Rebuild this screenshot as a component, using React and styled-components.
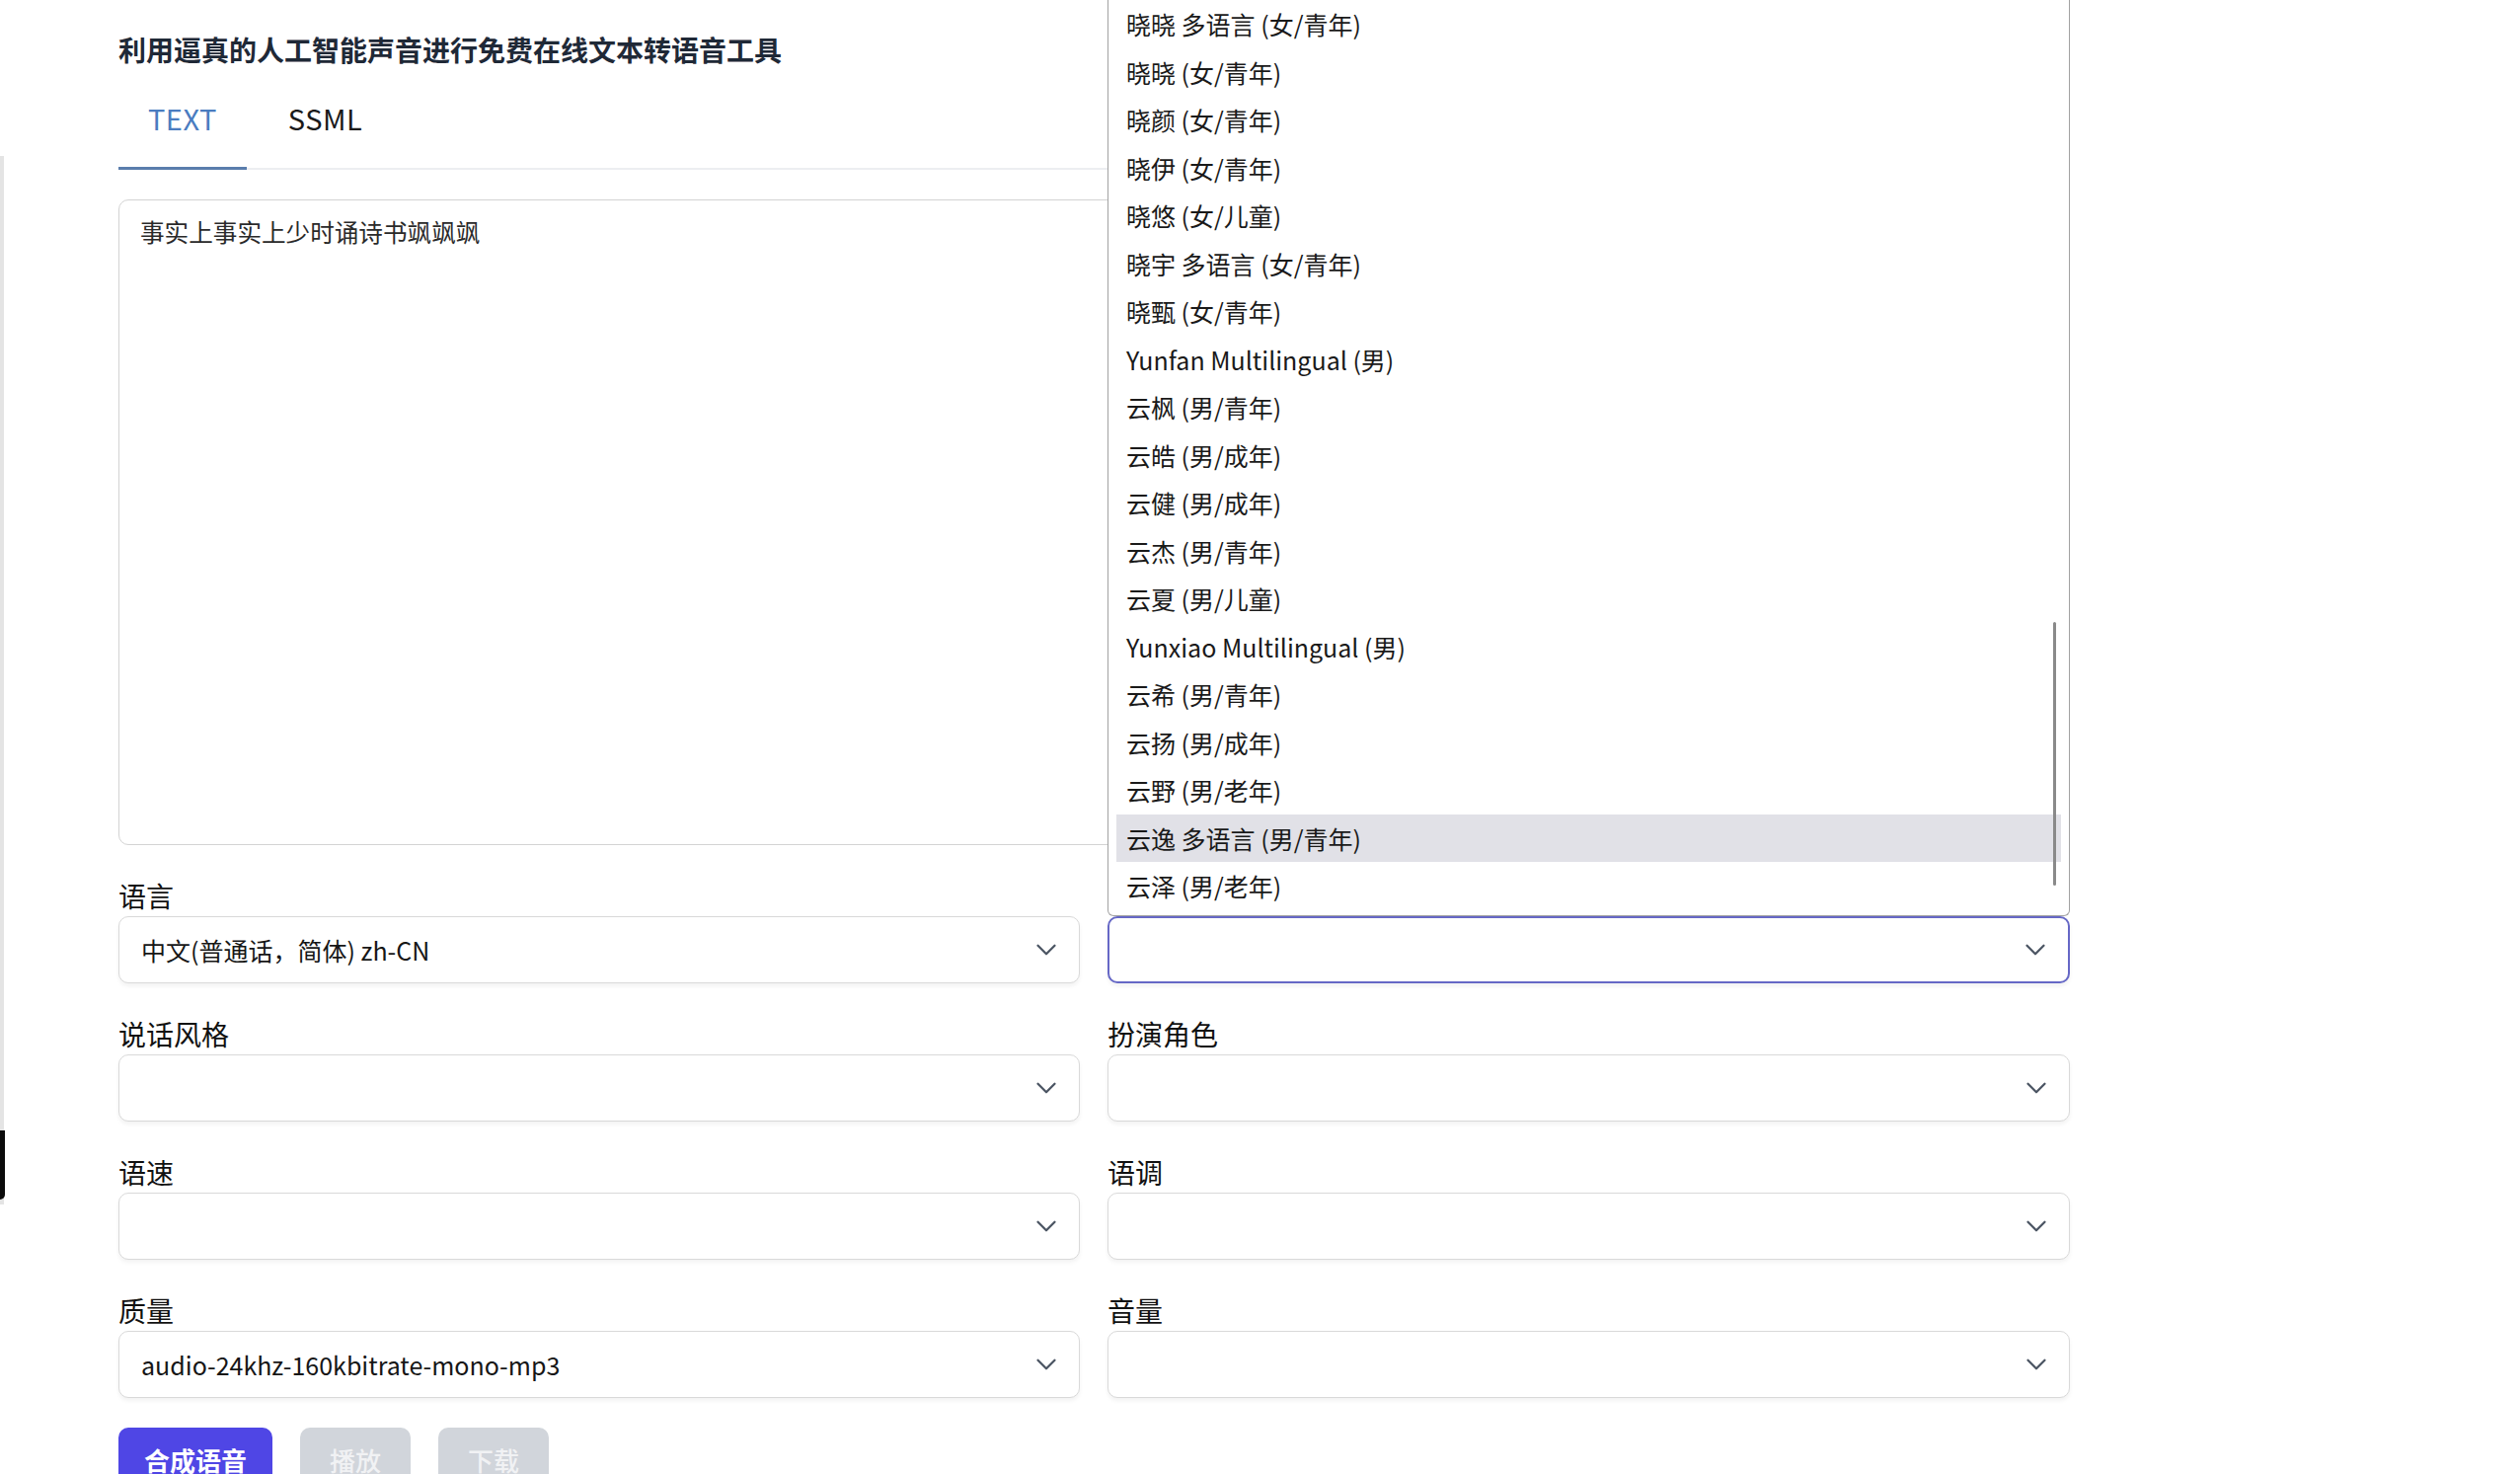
import React from "react";
import styled, { createGlobalStyle } from "styled-components";
import { ChevronDown } from "lucide-react";

const GlobalStyle = createGlobalStyle`
  html, body {
    margin: 0;
    padding: 0;
    background: #ffffff;
    font-family: "Noto Sans CJK SC", "Noto Sans", sans-serif;
    color: #111111;
  }
  * { box-sizing: border-box; }
`;

const Page = styled.main`
  width: 2553px;
  height: 1493px;
  overflow: hidden;
  padding: 32px 0 0 120px;
`;

const EdgeRail = styled.div`
  position: fixed;
  left: 0;
  top: 158px;
  width: 4px;
  height: 1062px;
  background: #e4e4e4;
`;

const EdgeThumb = styled.div`
  position: fixed;
  left: 0;
  top: 1145px;
  width: 5px;
  height: 70px;
  background: #0b0b0b;
  border-bottom-right-radius: 5px;
`;

const Form = styled.div`
  width: 1977px;
  display: flex;
  flex-direction: column;
`;

const Title = styled.h1`
  margin: 0;
  font-size: 28px;
  line-height: 36px;
  font-weight: 700;
  color: #1f2937;
`;

const TabList = styled.div`
  display: flex;
  gap: 12px;
  margin-top: 4px;
  box-shadow: inset 0 -2px 0 #eceef1;
`;

const Tab = styled.div`
  height: 100px;
  padding: 0 30px 3px;
  display: flex;
  align-items: center;
  font-size: 29px;
  letter-spacing: 0.5px;
  color: ${(p) => (p.$active ? "#4a7cc0" : "#1a1a1a")};
  border-bottom: 3px solid ${(p) => (p.$active ? "#5a7dac" : "transparent")};
`;

const TextArea = styled.textarea`
  margin-top: 30px;
  height: 654px;
  width: 100%;
  padding: 13px 21px;
  border: 1px solid #d3d3d3;
  border-radius: 10px;
  resize: none;
  outline: none;
  font-family: "Noto Sans CJK SC", sans-serif;
  font-size: 24.6px;
  line-height: 36px;
  color: #2a2a2a;
  background: #fff;
`;

const Fields = styled.div`
  margin-top: 33px;
  display: grid;
  grid-template-columns: 974px 975px;
  column-gap: 28px;
  row-gap: 33px;
`;

const Field = styled.div`
  display: flex;
  flex-direction: column;
  gap: 3px;
`;

const Label = styled.label`
  font-size: 28px;
  line-height: 36px;
  color: #111;
`;

const SelectWrap = styled.div`
  position: relative;
`;

const SelectBox = styled.div`
  height: 68px;
  display: flex;
  align-items: center;
  justify-content: space-between;
  padding: 0 16px 0 22px;
  background: #fff;
  border: ${(p) => (p.$focused ? "2px solid #6668c6" : "1px solid #d9d9d9")};
  border-radius: 10px;
  box-shadow: 0 3px 4px rgba(0, 0, 0, 0.05);
  font-size: 25px;
  color: #161616;
  svg { color: #4b5563; flex-shrink: 0; }
`;

const Popup = styled.div`
  position: absolute;
  left: 0;
  right: 0;
  bottom: 100%;
  height: 928px;
  background: #fff;
  border: 1px solid #a2a2a2;
  border-top: none;
  border-radius: 0 0 6px 6px;
  padding: 0 8px 6px;
  overflow: hidden;
  z-index: 5;
`;

const Option = styled.div`
  height: 48.5px;
  display: flex;
  align-items: center;
  padding-left: 10px;
  font-size: 25px;
  color: #1a1a1a;
  background: ${(p) => (p.$hover ? "#e1e1e7" : "transparent")};
`;

const ScrollThumb = styled.div`
  position: absolute;
  right: 13px;
  top: 630px;
  width: 3px;
  height: 267px;
  border-radius: 2px;
  background: #8a8a8a;
`;

const Actions = styled.div`
  margin-top: 30px;
  display: flex;
  gap: 28px;
`;

const Button = styled.button`
  height: 65px;
  padding: 0 ${(p) => (p.$primary ? "26px" : "30px")};
  border: none;
  border-radius: 10px;
  font-family: "Noto Sans CJK SC", sans-serif;
  font-size: 26px;
  font-weight: ${(p) => (p.$primary ? 700 : 500)};
  background: ${(p) => (p.$primary ? "#4f46e5" : "#d1d5db")};
  color: ${(p) => (p.$primary ? "#ffffff" : "#f1f2f4")};
`;

const voices = [
  "晓晓 多语言 (女/青年)",
  "晓晓 (女/青年)",
  "晓颜 (女/青年)",
  "晓伊 (女/青年)",
  "晓悠 (女/儿童)",
  "晓宇 多语言 (女/青年)",
  "晓甄 (女/青年)",
  "Yunfan Multilingual (男)",
  "云枫 (男/青年)",
  "云皓 (男/成年)",
  "云健 (男/成年)",
  "云杰 (男/青年)",
  "云夏 (男/儿童)",
  "Yunxiao Multilingual (男)",
  "云希 (男/青年)",
  "云扬 (男/成年)",
  "云野 (男/老年)",
  "云逸 多语言 (男/青年)",
  "云泽 (男/老年)",
];

const fields = [
  { label: "语言", value: "中文(普通话，简体) zh-CN" },
  { label: "语音", value: "", open: true },
  { label: "说话风格", value: "" },
  { label: "扮演角色", value: "" },
  { label: "语速", value: "" },
  { label: "语调", value: "" },
  { label: "质量", value: "audio-24khz-160kbitrate-mono-mp3" },
  { label: "音量", value: "" },
];

const Select = ({ value, open }) => (
  <SelectWrap>
    {open && (
      <Popup>
        {voices.map((v) => (
          <Option key={v} $hover={v === "云逸 多语言 (男/青年)"}>
            {v}
          </Option>
        ))}
        <ScrollThumb />
      </Popup>
    )}
    <SelectBox $focused={open}>
      <span>{value}</span>
      <ChevronDown size={34} strokeWidth={1.6} />
    </SelectBox>
  </SelectWrap>
);

export default function App() {
  return (
    <>
      <GlobalStyle />
      <EdgeRail />
      <EdgeThumb />
      <Page>
        <Form>
          <Title>利用逼真的人工智能声音进行免费在线文本转语音工具</Title>
          <TabList>
            <Tab $active>TEXT</Tab>
            <Tab>SSML</Tab>
          </TabList>
          <TextArea defaultValue="事实上事实上少时诵诗书飒飒飒" />
          <Fields>
            {fields.map((f) => (
              <Field key={f.label}>
                <Label>{f.label}</Label>
                <Select value={f.value} open={f.open} />
              </Field>
            ))}
          </Fields>
          <Actions>
            <Button $primary>合成语音</Button>
            <Button disabled>播放</Button>
            <Button disabled>下载</Button>
          </Actions>
        </Form>
      </Page>
    </>
  );
}
